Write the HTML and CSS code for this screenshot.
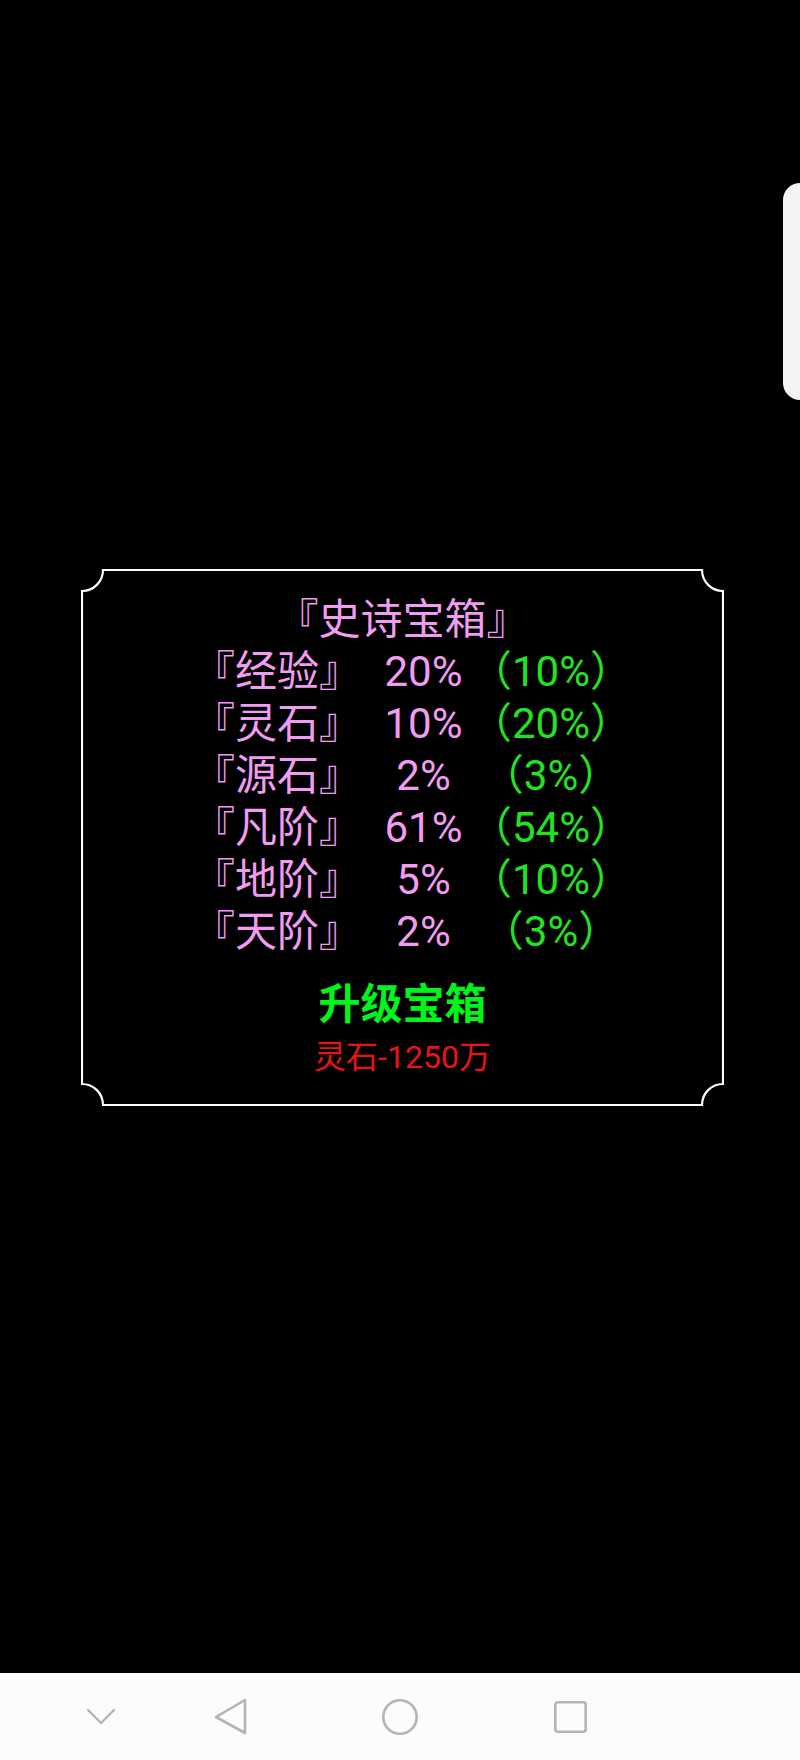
FILE: index.html
```html
<!DOCTYPE html>
<html lang="zh-CN">
<head>
<meta charset="utf-8">
<title>史诗宝箱</title>
<link rel="stylesheet" href="styles.css">
</head>
<body>
<main class="screen">
  <div class="edge-panel"></div>
  <section class="chest">
    <svg class="frame" width="643" height="537" viewBox="0 0 643 537" aria-hidden="true">
      <path d="M22 1 H621 A21 21 0 0 0 642 22 V515 A21 21 0 0 0 621 536 H22 A21 21 0 0 0 1 515 V22 A21 21 0 0 0 22 1 Z" fill="none" stroke="#fff" stroke-width="2.2"/>
    </svg>
    <div class="title">『史诗宝箱』</div>
    <div class="odds">
      <span class="name">『经验』</span><span class="pct">20%</span><span class="bonus">（10%）</span>
      <span class="name">『灵石』</span><span class="pct">10%</span><span class="bonus">（20%）</span>
      <span class="name">『源石』</span><span class="pct">2%</span><span class="bonus">（3%）</span>
      <span class="name">『凡阶』</span><span class="pct">61%</span><span class="bonus">（54%）</span>
      <span class="name">『地阶』</span><span class="pct">5%</span><span class="bonus">（10%）</span>
      <span class="name">『天阶』</span><span class="pct">2%</span><span class="bonus">（3%）</span>
    </div>
    <div class="upgrade">升级宝箱</div>
    <div class="cost">灵石-1250万</div>
  </section>
</main>
<nav class="navbar">
  <svg class="nav-icon chevron" width="30" height="20" viewBox="0 0 30 20"><polyline points="2,3 15,16 28,3" fill="none" stroke="#b4b4b4" stroke-width="2.4" stroke-linecap="round" stroke-linejoin="round"/></svg>
  <svg class="nav-icon back" width="36" height="40" viewBox="0 0 36 40"><polygon points="33,3 33,36 4,20" fill="none" stroke="#b4b4b4" stroke-width="2.6" stroke-linejoin="round"/></svg>
  <svg class="nav-icon home" width="40" height="40" viewBox="0 0 40 40"><circle cx="20" cy="20" r="16.7" fill="none" stroke="#b4b4b4" stroke-width="2.6"/></svg>
  <svg class="nav-icon recent" width="38" height="38" viewBox="0 0 38 38"><rect x="4.3" y="4.3" width="30.4" height="29.4" rx="2.5" fill="none" stroke="#b4b4b4" stroke-width="2.6"/></svg>
</nav>
</body>
</html>
```

FILE: styles.css
```css
html, body {
  margin: 0;
  padding: 0;
}

body {
  width: 800px;
  height: 1760px;
  background: #000;
  font-family: Roboto, "Noto Sans CJK SC", sans-serif;
  overflow: hidden;
}

.screen {
  position: relative;
  height: 1673px;
  box-sizing: border-box;
  padding-top: 569px;
  background: #000;
}

.edge-panel {
  position: absolute;
  top: 183px;
  right: 0;
  width: 17px;
  height: 217px;
  background: #f3f3f3;
  border-radius: 22px 0 0 22px;
}

.chest {
  position: relative;
  width: 643px;
  height: 537px;
  margin-left: 81px;
  box-sizing: border-box;
  padding-top: 25px;
}

.frame {
  position: absolute;
  left: 0;
  top: 0;
}

.title {
  text-align: center;
  font-size: 42px;
  line-height: 52px;
  color: #f09cf0;
  white-space: nowrap;
}

.odds {
  display: grid;
  grid-template-columns: 194px 99px 156px;
  justify-items: center;
  margin-left: 99px;
  width: 449px;
  font-size: 42px;
  line-height: 52px;
}

.odds span {
  white-space: nowrap;
}

.name,
.pct {
  color: #f09cf0;
}

.bonus {
  color: #22e322;
}

.upgrade {
  margin-top: 22px;
  text-align: center;
  font-size: 42px;
  font-weight: 700;
  line-height: 50px;
  color: #00f51a;
}

.cost {
  margin-top: 8px;
  text-align: center;
  font-size: 32px;
  line-height: 38px;
  color: #ea1313;
}

.navbar {
  display: flex;
  align-items: center;
  height: 87px;
  padding-left: 86px;
  background: #fcfcfc;
}

.nav-icon {
  display: block;
  flex: none;
}

.back {
  margin-left: 96px;
}

.home {
  margin-left: 132px;
}

.recent {
  margin-left: 131px;
}
```
